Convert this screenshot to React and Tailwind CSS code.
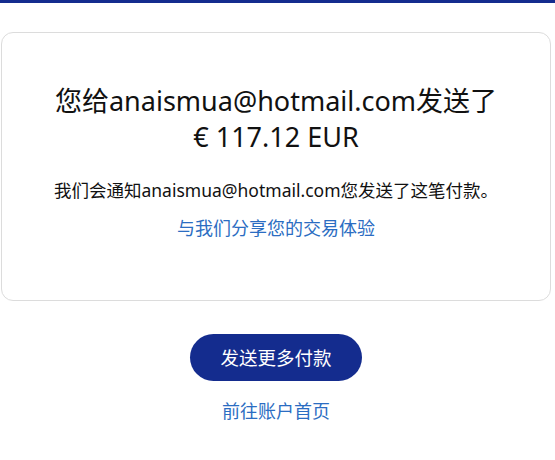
export default function App() {
  const font = { fontFamily: '"Noto Sans", "Noto Sans CJK SC", sans-serif' };
  return (
    <div className="w-[555px] h-[460px] bg-white" style={font}>
      <div className="h-[3px] bg-[#142c8e]" />
      <div className="pt-[29px] pl-px pr-[4px]">
        <div className="h-[269px] border border-[#dcdcdc] rounded-[12px] flex flex-col items-center pt-[50px]">
          <h1 className="text-[27px] leading-[36px] text-[#111] text-center">
            您给anaismua@hotmail.com发送了
            <br />€ 117.12 EUR
          </h1>
          <p className="mt-[22px] text-[17.5px] leading-[26px] text-[#111]">
            我们会通知anaismua@hotmail.com您发送了这笔付款。
          </p>
          <a className="mt-[12px] text-[18px] leading-[26px] text-[#2b6dc2]">与我们分享您的交易体验</a>
        </div>
      </div>
      <div className="flex flex-col items-center mt-[33px] pr-[3px]">
        <button className="w-[172px] h-[47px] rounded-full bg-[#142c8e] text-white text-[18.5px]">
          发送更多付款
        </button>
        <a className="mt-[17px] text-[18px] leading-[26px] text-[#2b6dc2]">前往账户首页</a>
      </div>
    </div>
  );
}
